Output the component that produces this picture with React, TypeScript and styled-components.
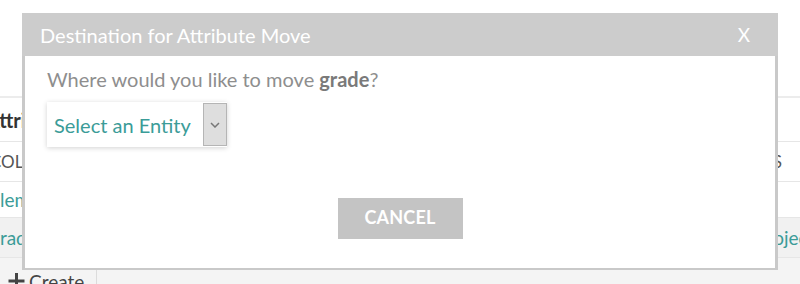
import React from 'react';
import styled, { createGlobalStyle } from 'styled-components';

const GlobalStyle = createGlobalStyle`
  html, body {
    margin: 0;
    padding: 0;
    background: #ffffff;
    font-family: Lato, "Noto Sans", sans-serif;
    overflow: hidden;
  }
  #root {
    width: 800px;
    height: 284px;
    position: relative;
    overflow: hidden;
  }
`

// page behind the dialog
const Page = styled.div`
  display: flex;
  flex-direction: column;
  height: 284px;
  padding-top: 96px;
  box-sizing: border-box;
  margin-left: -10px;
  background: #ffffff;
`

const Panel = styled.div`
  border-top: 2px solid #ececec;
  display: flex;
  flex-direction: column;
`

const PanelTitle = styled.div`
  height: 43px;
  display: flex;
  align-items: center;
  text-indent: -4px;
  font-size: 20px;
  font-weight: 700;
  color: #333;
  border-bottom: 1px solid #e6e6e6;
`

const Row = styled.div<{ $shade?: boolean; $height: number }>`
  height: ${p => p.$height}px;
  display: flex;
  align-items: center;
  background: ${p => (p.$shade ? '#f1f1f1' : '#ffffff')};
  border-bottom: 1px solid #e6e6e6;
  white-space: nowrap;
`

const Cell = styled.div<{ $teal?: boolean; $head?: boolean }>`
  flex: 1;
  font-size: ${p => (p.$head ? '17px' : '19px')};
  color: ${p => (p.$teal ? '#3b9c98' : '#555')};
`

const EndCell = styled.div<{ $teal?: boolean; $head?: boolean; $alignEnd?: boolean }>`
  width: 50px;
  display: flex;
  justify-content: ${p => (p.$alignEnd ? 'flex-end' : 'flex-start')};
  padding: ${p => (p.$alignEnd ? '0 18px 0 0' : '0 0 0 6px')};
  box-sizing: border-box;
  font-size: ${p => (p.$head ? '17px' : '19px')};
  color: ${p => (p.$teal ? '#3b9c98' : '#555')};
`

const Footer = styled.div`
  flex: 1;
  background: #f4f4f4;
  display: flex;
  align-items: flex-end;
  padding-left: 10px;
`

const CreateButton = styled.div`
  height: 14px;
  width: 97px;
  box-sizing: border-box;
  border-right: 1px solid #dcdcdc;
  display: flex;
  align-items: flex-start;
  gap: 4px;
  padding-left: 8px;
  font-size: 19px;
  color: #444;
  line-height: 24px;
  svg {
    margin-top: 2px;
  }
`

// dialog
const Dialog = styled.div`
  position: absolute;
  left: 22px;
  top: 13px;
  width: 756px;
  height: 257px;
  display: flex;
  flex-direction: column;
  background: #c9c9c9;
`

const Header = styled.div`
  height: 43px;
  flex-shrink: 0;
  display: flex;
  align-items: center;
  justify-content: space-between;
  padding: 0 28px 0 18px;
  background: #cccccc;
  color: #ffffff;
  font-size: 20px;
`

const Close = styled.span`
  font-size: 19px;
  color: #ffffff;
`

const Body = styled.div`
  flex: 1;
  margin: 0 3px 2px 3px;
  background: #ffffff;
  display: flex;
  flex-direction: column;
  padding: 10px 22px 0 22px;
`

const Question = styled.div`
  font-size: 20px;
  color: #8e8e8e;
  height: 26px;
  line-height: 26px;
  strong {
    color: #7a7a7a;
    font-weight: 700;
  }
`

const Select = styled.div`
  margin-top: 10px;
  width: 180px;
  height: 45px;
  display: flex;
  align-items: stretch;
  background: #ffffff;
  box-shadow: 0 1px 5px rgba(0, 0, 0, 0.18);
`

const SelectLabel = styled.div`
  flex: 1;
  display: flex;
  align-items: center;
  padding-left: 7px;
  color: #3b9c98;
  font-size: 20px;
`

const Caret = styled.div`
  width: 22px;
  margin: 1px 0;
  border: 1px solid #b5b5b5;
  background: #dedede;
  display: flex;
  align-items: center;
  justify-content: center;
`

const Actions = styled.div`
  display: flex;
  justify-content: center;
  margin-top: 51px;
`

const CancelButton = styled.button`
  width: 125px;
  height: 41px;
  border: none;
  background: #c4c4c4;
  color: #ffffff;
  font-family: Lato, "Noto Sans", sans-serif;
  font-size: 18px;
  font-weight: 700;
  letter-spacing: 0.2px;
  padding: 0 0 4px 0;
`

const App = (): JSX.Element => (
  <>
    <GlobalStyle />
    <Page>
      <Panel>
        <PanelTitle>Attributes</PanelTitle>
        <Row $height={39}>
          <Cell $head>COLUMN</Cell>
          <EndCell $head $alignEnd>ATTRIBUTES</EndCell>
        </Row>
        <Row $height={35}>
          <Cell $teal>element</Cell>
          <EndCell />
        </Row>
        <Row $height={39} $shade>
          <Cell $teal>grade</Cell>
          <EndCell $teal>projects</EndCell>
        </Row>
      </Panel>
      <Footer>
        <CreateButton>
          <svg width="17" height="17" viewBox="0 0 17 17">
            <path d="M8.5 1v16M0.5 9h16" stroke="#444" strokeWidth="3" />
          </svg>
          Create
        </CreateButton>
      </Footer>
    </Page>
    <Dialog>
      <Header>
        <span>Destination for Attribute Move</span>
        <Close>X</Close>
      </Header>
      <Body>
        <Question>
          Where would you like to move <strong>grade</strong>?
        </Question>
        <Select>
          <SelectLabel>Select an Entity</SelectLabel>
          <Caret>
            <svg width="10" height="6" viewBox="0 0 10 6">
              <path d="M1 1l4 4 4-4" fill="none" stroke="#777" strokeWidth="1.5" />
            </svg>
          </Caret>
        </Select>
        <Actions>
          <CancelButton>CANCEL</CancelButton>
        </Actions>
      </Body>
    </Dialog>
  </>
);

export default App;
